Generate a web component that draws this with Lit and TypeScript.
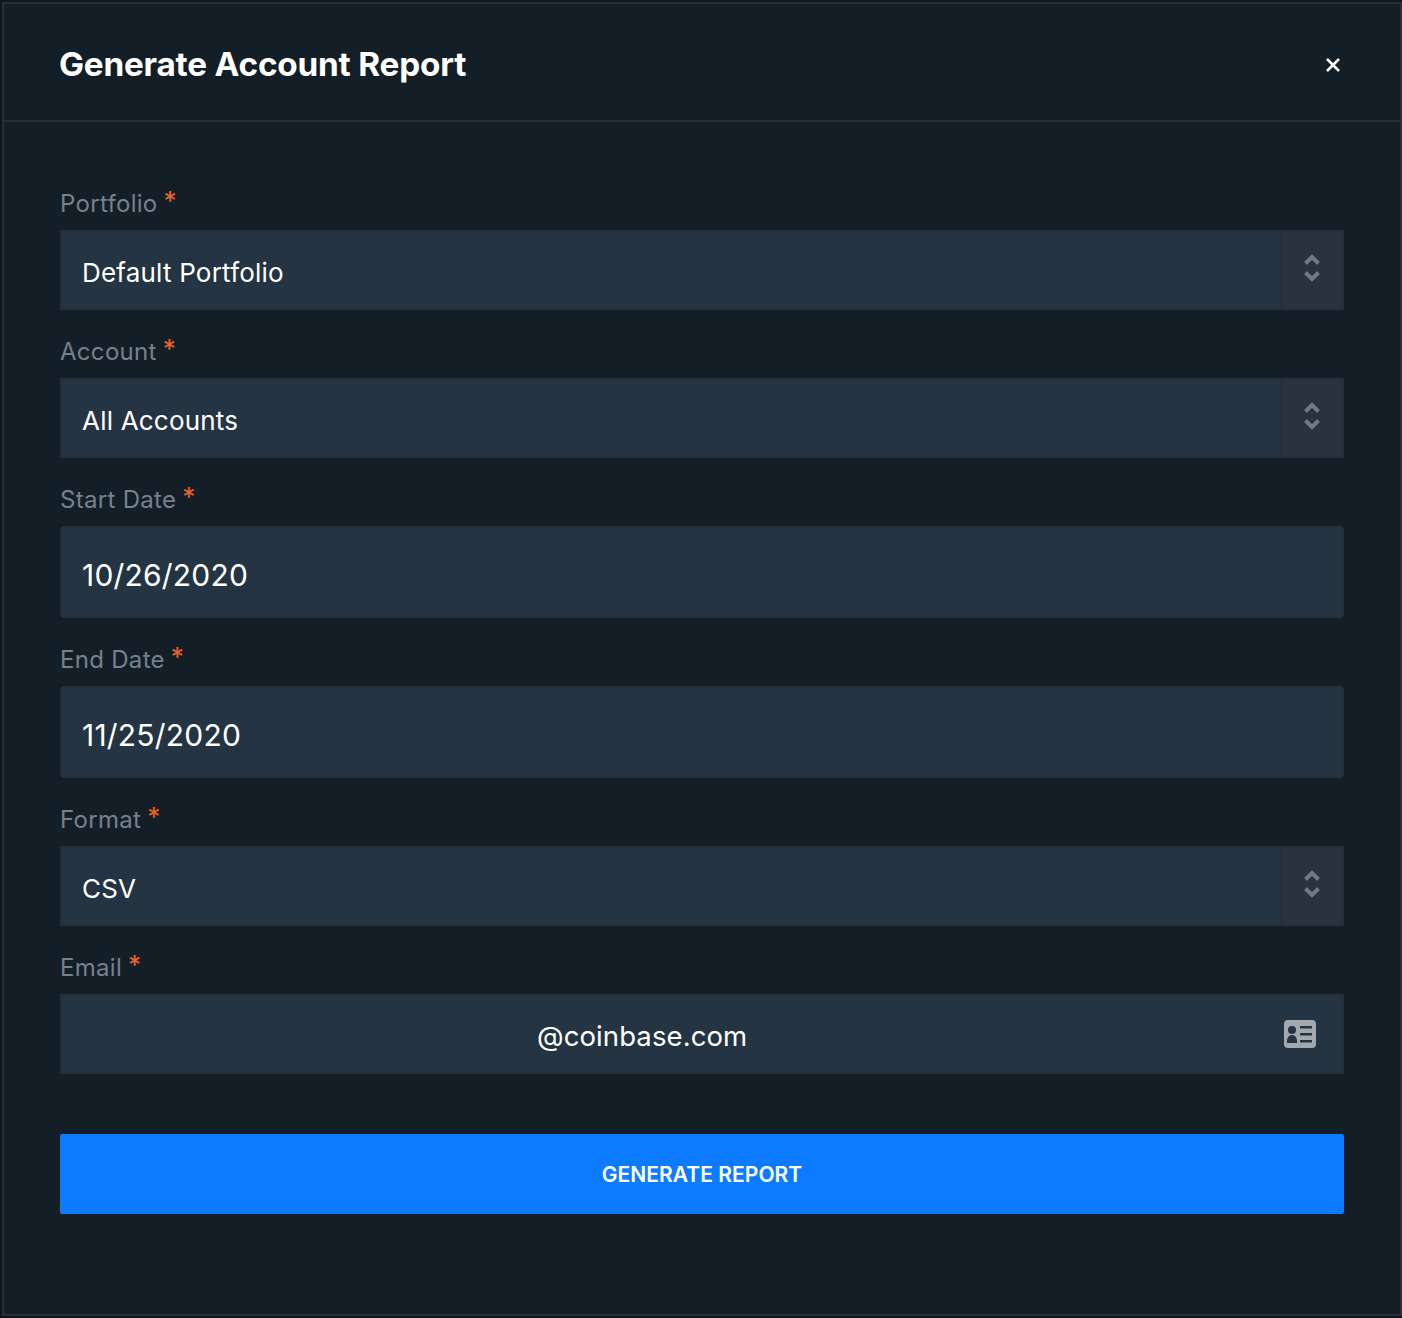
import { LitElement, html, css, svg } from "lit";
import { customElement } from "lit/decorators.js";

type Field = { label: string; value: string; kind: "select" | "date" | "email" };

const FIELDS: Field[] = [
  { label: "Portfolio", value: "Default Portfolio", kind: "select" },
  { label: "Account", value: "All Accounts", kind: "select" },
  { label: "Start Date", value: "10/26/2020", kind: "date" },
  { label: "End Date", value: "11/25/2020", kind: "date" },
  { label: "Format", value: "CSV", kind: "select" },
  { label: "Email", value: "@coinbase.com", kind: "email" },
];

const chevrons = svg`<path d="M-6.500 -4.500 L0 -11 L6.500 -4.500 M-6.500 4.500 L0 11 L6.500 4.500" fill="none" stroke="#6f7a86" stroke-width="4"/>`;

@customElement("app-root")
export class AppRoot extends LitElement {
  static styles = css`
    :host {
      display: block;
      width: 1402px;
      height: 1318px;
      box-sizing: border-box;
      padding: 2px 0 2px 2px;
      background: #0e151c;
      font-family: "Inter", "Liberation Sans", sans-serif;
    }
    .modal {
      height: 100%;
      box-sizing: border-box;
      background: #141e27;
      border: 2px solid #262f38;
      display: flex;
      flex-direction: column;
    }
    .head {
      height: 118px;
      box-sizing: border-box;
      border-bottom: 2px solid #262f38;
      padding: 3px 56px 0;
      display: flex;
      align-items: center;
      justify-content: space-between;
    }
    h1 {
      margin: 0 0 0 -1px;
      font-size: 33.3px;
      font-weight: 700;
      letter-spacing: -0.2px;
      color: #fff;
    }
    .close { display: block; margin: 3px 4px 0 0; }
    form {
      padding: 52px 56px 0;
      display: flex;
      flex-direction: column;
    }
    .label {
      height: 68px;
      box-sizing: border-box;
      padding-top: 24px;
      font-size: 24px;
      line-height: 36px;
      color: #76818d;
      letter-spacing: 0.3px;
      display: flex;
      gap: 6px;
    }
    .first { height: 56px; padding-top: 12px; }
    .star { color: #f0622a; line-height: 30px; font-size: 26px; }
    .box {
      height: 80px;
      box-sizing: border-box;
      background: #253443;
      border: 2px solid #262f38;
      display: flex;
      align-items: center;
      color: #fff;
      font-size: 26px;
      letter-spacing: 0.2px;
    }
    .value { flex: 1; padding: 4px 0 0 20px; }
    .box.date { height: 92px; border-radius: 4px; font-size: 30px; letter-spacing: 0.2px; }
    .date .value { padding-top: 6px; }
    .stepper {
      width: 62px;
      height: 100%;
      box-sizing: border-box;
      background: #28333e;
      border-left: 2px solid #262f38;
      display: flex;
      align-items: center;
      justify-content: center;
    }
    .stepper svg { margin-bottom: 4px; }
    .email .value { padding-left: 475px; font-size: 27.5px; letter-spacing: 0.1px; }
    .card { display: block; margin-right: 26px; }
    button {
      margin-top: 60px;
      height: 80px;
      border: 0;
      border-radius: 2px;
      background: #0d7bff;
      color: #fff;
      font: 600 21px "Inter", "Liberation Sans", sans-serif;
      letter-spacing: 0.05px;
    }
  `;

  private renderBox(f: Field) {
    return html`<div class="box ${f.kind}">
      <span class="value">${f.value}</span>
      ${f.kind === "select"
        ? html`<span class="stepper"><svg width="24" height="32" viewBox="-12 -16 24 32">${chevrons}</svg></span>`
        : ""}
      ${f.kind === "email"
        ? html`<svg class="card" width="32" height="28" viewBox="0 0 32 28">
            <rect y="0" width="32" height="28" rx="4" fill="#a3a8ae"></rect>
            <circle cx="8" cy="10" r="4" fill="#253443"></circle>
            <path d="M3 23 V20 Q4 15 8 15 Q12 15 13 20 V23Z" fill="#253443"></path>
            <path d="M16 6h12v2.500H16zM16 13h12v2.500H16zM16 20h12v2.500H16z" fill="#253443"></path>
          </svg>`
        : ""}
    </div>`;
  }

  render() {
    return html`<section class="modal">
      <header class="head">
        <h1>Generate Account Report</h1>
        <svg class="close" width="14" height="14" viewBox="0 0 14 14">
          <path d="M1 1L13 13M13 1L1 13" stroke="#fff" stroke-width="2.500" fill="none"></path>
        </svg>
      </header>
      <form>
        ${FIELDS.map(
          (f, i) => html`<div class="label ${i === 0 ? "first" : ""}">
              <span>${f.label}</span><span class="star">*</span>
            </div>
            ${this.renderBox(f)}`
        )}
        <button type="button">GENERATE REPORT</button>
      </form>
    </section>`;
  }
}
